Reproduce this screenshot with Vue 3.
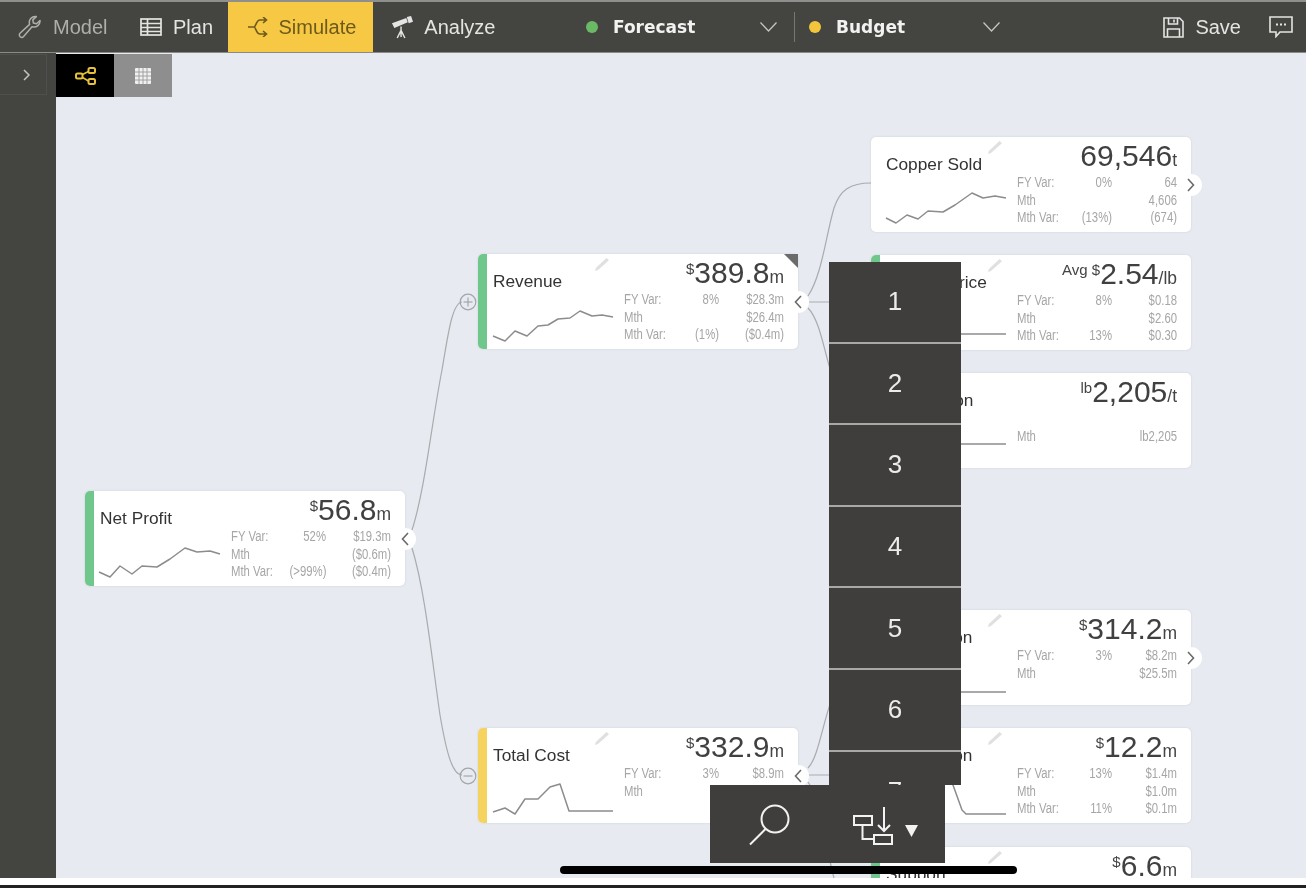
<template>
  <div class="page">
    <header class="topbar">
      <div class="nav-item dim">
        <svg width="24" height="24" viewBox="0 0 24 24" fill="none" stroke="currentColor" stroke-width="1.5" stroke-linejoin="round"><path d="M22 5.500a6 6 0 0 1-8 6.200L5.600 21.600a2.400 2.400 0 0 1-3.600-3.300l9.600-8.900A6 6 0 0 1 18.300 1.600l-3.500 3.300.6 3.100 3.100.8z"/></svg>
        <span>Model</span>
      </div>
      <div class="nav-item">
        <svg width="22" height="18" viewBox="0 0 22 18" fill="none" stroke="currentColor" stroke-width="1.700"><rect x="1" y="1" width="20" height="16"/><path d="M1 5.500h20M1 9.500h20M1 13.500h20M7.500 1v16"/></svg>
        <span>Plan</span>
      </div>
      <div class="nav-item active">
        <svg width="20" height="20" viewBox="0 0 20 20" fill="none" stroke="currentColor" stroke-width="1.600"><path d="M0 10h6M6 10C8 10 8 3 12 3h6M6 10c2 0 2 7 6 7h6M15 0l3.500 3-3.500 3M15 14l3.500 3-3.500 3"/></svg>
        <span>Simulate</span>
      </div>
      <div class="nav-item">
        <svg width="22" height="23" viewBox="0 0 23 24" fill="currentColor"><path d="M1 7.500l15-5.500 1.500 4.500-14 6zM16.500 1l4.500-1 2 6-4.500 1.500z"/><path d="M10.500 11v4M10.500 15l-4 8M10.500 15l4 8M10.500 15v7" fill="none" stroke="currentColor" stroke-width="1.500"/></svg>
        <span>Analyze</span>
      </div>

      <div class="selectors">
        <div class="selector">
          <i class="dot green"></i>
          <span class="sel-name">Forecast</span>
          <svg class="chev" width="17" height="10" viewBox="0 0 17 10" fill="none" stroke="currentColor" stroke-width="1.300"><path d="M.5.500l8 8.500 8-8.500"/></svg>
        </div>
        <div class="sep"></div>
        <div class="selector">
          <i class="dot yellow"></i>
          <span class="sel-name">Budget</span>
          <svg class="chev" width="17" height="10" viewBox="0 0 17 10" fill="none" stroke="currentColor" stroke-width="1.300"><path d="M.5.500l8 8.500 8-8.500"/></svg>
        </div>
      </div>

      <div class="actions">
        <svg width="21" height="21" viewBox="0 0 21 21" fill="none" stroke="currentColor" stroke-width="1.600"><path d="M1 1h15.500L20 4.500V20H1z"/><path d="M5.500 1v6h9V1M11 2.500v3M4.500 20v-8h12v8"/></svg>
        <span>Save</span>
        <svg class="chat" width="24" height="22" viewBox="0 0 24 22" fill="none" stroke="currentColor" stroke-width="1.600"><path d="M1 1h22v15H11l-4 4.500V16H1z"/><path d="M7 8.500h2M11 8.500h2M15 8.500h2" stroke-width="2.200"/></svg>
      </div>
    </header>

    <div class="main">
      <aside class="sidebar">
        <div class="toggle">
          <svg width="7" height="12" viewBox="0 0 7 12" fill="none" stroke="currentColor" stroke-width="1.500"><path d="M1 1l5 5-5 5"/></svg>
        </div>
      </aside>

      <section class="canvas">
        <div class="tabs">
          <div class="tab on">
            <svg width="21" height="18" viewBox="0 0 21 18" fill="none" stroke="#e6c23c" stroke-width="2"><rect x="1" y="6.500" width="6.500" height="5" rx="1.500"/><rect x="13.500" y="1" width="6.500" height="5" rx="1.500"/><rect x="13.500" y="12" width="6.500" height="5" rx="1.500"/><path d="M7.500 7.500l6-3M7.500 10.500l6 3.500" stroke-width="1.500"/></svg>
          </div>
          <div class="tab off">
            <svg width="16" height="16" viewBox="0 0 16 16"><rect width="16" height="16" rx="1" fill="#f0f0f0"/><path d="M4 0v16M8 0v16M12 0v16M0 4h16M0 8h16M0 12h16" stroke="#9a9a9a" stroke-width=".9"/></svg>
          </div>
        </div>

        <svg class="links" width="1250" height="825" viewBox="56 53 1250 825" fill="none" stroke="#a9abae" stroke-width="1.200">
          <path d="M412 530C425 490 432 420 442 370 448 335 452 303 462 302"/>
          <path d="M412 548C425 590 432 660 440 715 446 750 452 775 462 775"/>
          <path d="M808 296C822 275 826 235 834 208 840 190 850 183 871 183"/>
          <path d="M808 302H871"/>
          <path d="M808 308C830 330 826 420 871 420"/>
          <path d="M808 768C826 750 826 657 871 657"/>
          <path d="M808 775H871"/>
          <path d="M808 782C822 800 826 850 834 878"/>
        </svg>

        <article v-for="c in cards" :key="c.title" class="card" :style="{ left: c.x - 56 + 'px', top: c.y - 53 + 'px' }">
          <i v-if="c.accent" class="accent" :style="{ background: c.accent }"></i>
          <svg v-if="c.pencil" class="pencil" width="14" height="13" viewBox="0 0 14 13" fill="#e0e0e0"><path d="M11.500 0L14 2.200 3 12 0 13l.8-3z"/></svg>
          <i v-if="c.flag" class="flag"></i>

          <div class="left">
            <div class="title">{{ c.title }}</div>
            <svg class="spark" width="146" height="58" viewBox="0 37 146 58" fill="none" stroke="#8c8c8c" stroke-width="1.500" stroke-linejoin="round">
              <polyline :points="c.spark.join(' ')"/>
            </svg>
          </div>

          <div class="right">
            <div class="value">
              <span class="pre" v-if="c.pre">{{ c.pre }}</span><span class="num">{{ c.value }}</span><span class="unit">{{ c.unit }}</span>
            </div>
            <div v-for="r in c.rows" :key="r[0]" class="row">
              <span class="label-cell">{{ r[0] }}</span>
              <span class="num-cell">{{ r[1] }}</span>
              <span class="num-cell">{{ r[2] }}</span>
            </div>
          </div>

          <div v-if="c.handle" class="handle">
            <svg width="8" height="14" viewBox="0 0 8 14" fill="none" stroke="#6a6a6a" stroke-width="1.600">
              <path :d="c.handle === 'left' ? 'M7 1L1.500 7 7 13' : 'M1 1l5.500 6L1 13'"/>
            </svg>
          </div>
          <svg v-if="c.toggle" class="node-toggle" width="18" height="18" viewBox="0 0 18 18" fill="none" stroke="#a3a5a8" stroke-width="1.200">
            <circle cx="9" cy="9" r="7.800"/>
            <path d="M4.500 9h9"/>
            <path v-if="c.toggle === 'plus'" d="M9 4.500v9"/>
          </svg>
        </article>
      </section>
    </div>

    <div class="strip"></div>

    <div class="menu">
      <div v-for="n in 7" :key="n" class="menu-row">{{ n }}</div>
    </div>

    <div class="tools">
      <svg width="42" height="42" viewBox="0 0 42 42" fill="none" stroke="#f2f2f2" stroke-width="2">
        <circle cx="27" cy="15" r="13.500"/>
        <path d="M17.500 25L2 40.500"/>
      </svg>
      <svg width="66" height="42" viewBox="0 0 66 42" fill="none" stroke="#f2f2f2" stroke-width="2">
        <rect x="1" y="12" width="18" height="9"/>
        <rect x="21" y="31" width="18" height="9"/>
        <path d="M9.500 21v14H21M31 3v23M25 21l6 6 6-6"/>
        <path d="M52 21h13l-6.500 12z" fill="#f2f2f2" stroke="none"/>
      </svg>
    </div>

    <div class="pill"></div>
  </div>
</template>

<script setup>
const green = '#6fc78b'
const yellow = '#f6d25e'

const flat = (y) => [[15, y], [135, y]]

const cards = [
  {
    title: 'Net Profit', x: 85, y: 491, accent: green, pre: '$', value: '56.8', unit: 'm', handle: 'left',
    spark: [[14, 81], [25, 86], [35, 75], [47, 83], [57, 75], [72, 76], [85, 68], [100, 57], [112, 61], [125, 60], [135, 63]],
    rows: [['FY Var:', '52%', '$19.3m'], ['Mth', '', '($0.6m)'], ['Mth Var:', '(>99%)', '($0.4m)']]
  },
  {
    title: 'Revenue', x: 478, y: 254, accent: green, pencil: true, flag: true, pre: '$', value: '389.8', unit: 'm', handle: 'left', toggle: 'plus',
    spark: [[15, 82], [27, 87], [37, 77], [49, 82], [60, 72], [70, 71], [80, 65], [92, 64], [102, 57], [114, 62], [124, 61], [135, 63]],
    rows: [['FY Var:', '8%', '$28.3m'], ['Mth', '', '$26.4m'], ['Mth Var:', '(1%)', '($0.4m)']]
  },
  {
    title: 'Total Cost', x: 478, y: 728, accent: yellow, pencil: true, pre: '$', value: '332.9', unit: 'm', handle: 'left', toggle: 'minus',
    spark: [[15, 84], [27, 80], [37, 86], [47, 71], [60, 71], [72, 59], [82, 56], [91, 83], [135, 83]],
    rows: [['FY Var:', '3%', '$8.9m'], ['Mth', '', '$9.2m']]
  },
  {
    title: 'Copper Sold', x: 871, y: 137, pencil: true, pre: '', value: '69,546', unit: 't', handle: 'right',
    spark: [[15, 81], [25, 86], [36, 78], [47, 82], [57, 74], [72, 75], [84, 68], [101, 56], [112, 61], [124, 59], [135, 61]],
    rows: [['FY Var:', '0%', '64'], ['Mth', '', '4,606'], ['Mth Var:', '(13%)', '(674)']]
  },
  {
    title: 'Copper Price', x: 871, y: 255, accent: green, pencil: true, pre: 'Avg $', value: '2.54', unit: '/lb',
    spark: flat(79),
    rows: [['FY Var:', '8%', '$0.18'], ['Mth', '', '$2.60'], ['Mth Var:', '13%', '$0.30']]
  },
  {
    title: 'Conversion', x: 871, y: 373, accent: green, pre: 'lb', value: '2,205', unit: '/t',
    spark: flat(71),
    rows: [['', '', ''], ['Mth', '', 'lb2,205']]
  },
  {
    title: 'Distribution', x: 871, y: 610, accent: yellow, pencil: true, pre: '$', value: '314.2', unit: 'm', handle: 'right',
    spark: flat(82),
    rows: [['FY Var:', '3%', '$8.2m'], ['Mth', '', '$25.5m']]
  },
  {
    title: 'Exploration', x: 871, y: 728, accent: yellow, pencil: true, pre: '$', value: '12.2', unit: 'm',
    spark: [[75, 50], [82, 57], [91, 82], [95, 86], [135, 86]],
    rows: [['FY Var:', '13%', '$1.4m'], ['Mth', '', '$1.0m'], ['Mth Var:', '11%', '$0.1m']]
  },
  {
    title: 'Support', x: 871, y: 847, accent: green, pencil: true, pre: '$', value: '6.6', unit: 'm',
    spark: flat(86),
    rows: []
  }
]
</script>

<style>
html, body { margin: 0; background: #fff; }
</style>

<style scoped>
.page {
  position: relative;
  width: 1306px;
  height: 888px;
  overflow: hidden;
  display: flex;
  flex-direction: column;
  font-family: "Liberation Sans", Arial, sans-serif;
  filter: blur(0.5px);
}

/* top bar */
.topbar {
  height: 50px;
  flex: none;
  border-top: 2px solid #8f8f8d;
  border-bottom: 1px solid #8a8a88;
  background: #444441;
  display: flex;
  align-items: stretch;
  color: #e4e4e2;
  font-size: 20px;
}
.nav-item {
  display: flex;
  align-items: center;
  gap: 11px;
  padding: 0 14.500px 0 18px;
}
.nav-item.dim { color: #aeaeac; }
.nav-item.active { background: #f6c844; color: #6d5a1c; padding: 0 17px 0 20px; }
.selectors {
  margin-left: 76px;
  display: flex;
  align-items: center;
}
.selector {
  width: 191px;
  display: flex;
  align-items: center;
}
.dot { width: 12px; height: 12px; border-radius: 50%; margin-right: 15px; flex: none; }
.dot.green { background: #6ab965; }
.dot.yellow { background: #f3c43c; }
.sel-name {
  font-family: "DejaVu Sans", sans-serif;
  font-weight: 700;
  font-size: 17px;
  color: #f2f2f0;
}
.chev { margin-left: auto; color: #c4c4c2; }
.sep { width: 1px; height: 30px; background: #77776f; margin: 0 14px 0 17px; }
.actions {
  margin-left: auto;
  padding-right: 13px;
  display: flex;
  align-items: center;
  gap: 11px;
}
.chat { margin-left: 17px; }

/* body */
.main { flex: 1; display: flex; min-height: 0; }
.sidebar { width: 56px; flex: none; background: #444441; }
.toggle {
  width: 47px;
  height: 41px;
  margin-top: 1px;
  padding-left: 6px;
  border: 1px solid #4f4f4d;
  border-left: none;
  box-sizing: border-box;
  display: flex;
  align-items: center;
  justify-content: center;
  color: #c4c4c2;
}
.canvas {
  flex: 1;
  position: relative;
  overflow: hidden;
  background: #e7eaf1;
}
.tabs { display: flex; margin-top: 1px; }
.tab {
  width: 58px;
  height: 43px;
  display: flex;
  align-items: center;
  justify-content: center;
}
.tab.on { background: #000; }
.tab.off { background: #8e8e8e; }
.links { position: absolute; left: 0; top: 0; }

/* nodes of the tree */
.card {
  position: absolute;
  width: 320px;
  height: 95px;
  background: #fff;
  border-radius: 5px;
  display: flex;
  box-shadow: 0 0 2px rgba(120, 125, 140, .25);
}
.accent {
  position: absolute;
  left: 0;
  top: 0;
  bottom: 0;
  width: 9px;
  border-radius: 5px 0 0 5px;
}
.pencil { position: absolute; left: 117px; top: 4px; }
.flag {
  position: absolute;
  right: 0;
  top: 0;
  border-style: solid;
  border-width: 0 14px 14px 0;
  border-color: transparent #6b6b6b transparent transparent;
}
.left { width: 146px; flex: none; }
.title {
  height: 20px;
  padding: 17px 0 0 15px;
  font-size: 17.300px;
  line-height: 20px;
  color: #333;
  white-space: nowrap;
}
.spark { display: block; }
.right { width: 160px; }
.value {
  height: 37px;
  text-align: right;
  white-space: nowrap;
  line-height: 37px;
  color: #404040;
}
.num { font-size: 30px; }
/* line-height 1 so the raised prefix doesn't push the baseline down */
.pre { font-size: 15px; line-height: 1; vertical-align: 9px; color: #444; }
.unit { font-size: 17.500px; color: #444; }
.row {
  display: grid;
  grid-template-columns: 50px 45px 65px;
  height: 17.500px;
  line-height: 17.500px;
  font-size: 14px;
  color: #a6a6a6;
  white-space: nowrap;
}
/* the app uses a condensed face, none is installed so squeeze the sans */
.label-cell { transform: scaleX(.81); transform-origin: left center; }
.num-cell { text-align: right; transform: scaleX(.81); transform-origin: right center; }
.handle {
  position: absolute;
  right: -11px;
  top: 37px;
  width: 22px;
  height: 22px;
  border-radius: 50%;
  background: #fff;
  display: flex;
  align-items: center;
  justify-content: center;
}
.node-toggle { position: absolute; left: -19px; top: 39px; }

.strip {
  height: 10px;
  flex: none;
  background: #fff;
  border-bottom: 3px solid #222;
  box-sizing: border-box;
}

/* popups on top of the tree */
.menu {
  position: absolute;
  left: 829px;
  top: 262px;
  width: 132px;
  height: 523px;
  overflow: hidden;
  background: #403e3c;
}
.menu-row {
  height: 79.600px;
  border-bottom: 2px solid #a8a8a6;
  display: flex;
  align-items: center;
  justify-content: center;
  color: #ececec;
  font-size: 26px;
}
.tools {
  position: absolute;
  left: 710px;
  top: 785px;
  width: 235px;
  height: 78px;
  box-sizing: border-box;
  padding: 19px 26px 0 38px;
  display: flex;
  justify-content: space-between;
  align-items: flex-start;
  background: #403e3c;
}
.pill {
  position: absolute;
  left: 560px;
  top: 866px;
  width: 457px;
  height: 8px;
  border-radius: 4px;
  background: #000;
}
</style>
